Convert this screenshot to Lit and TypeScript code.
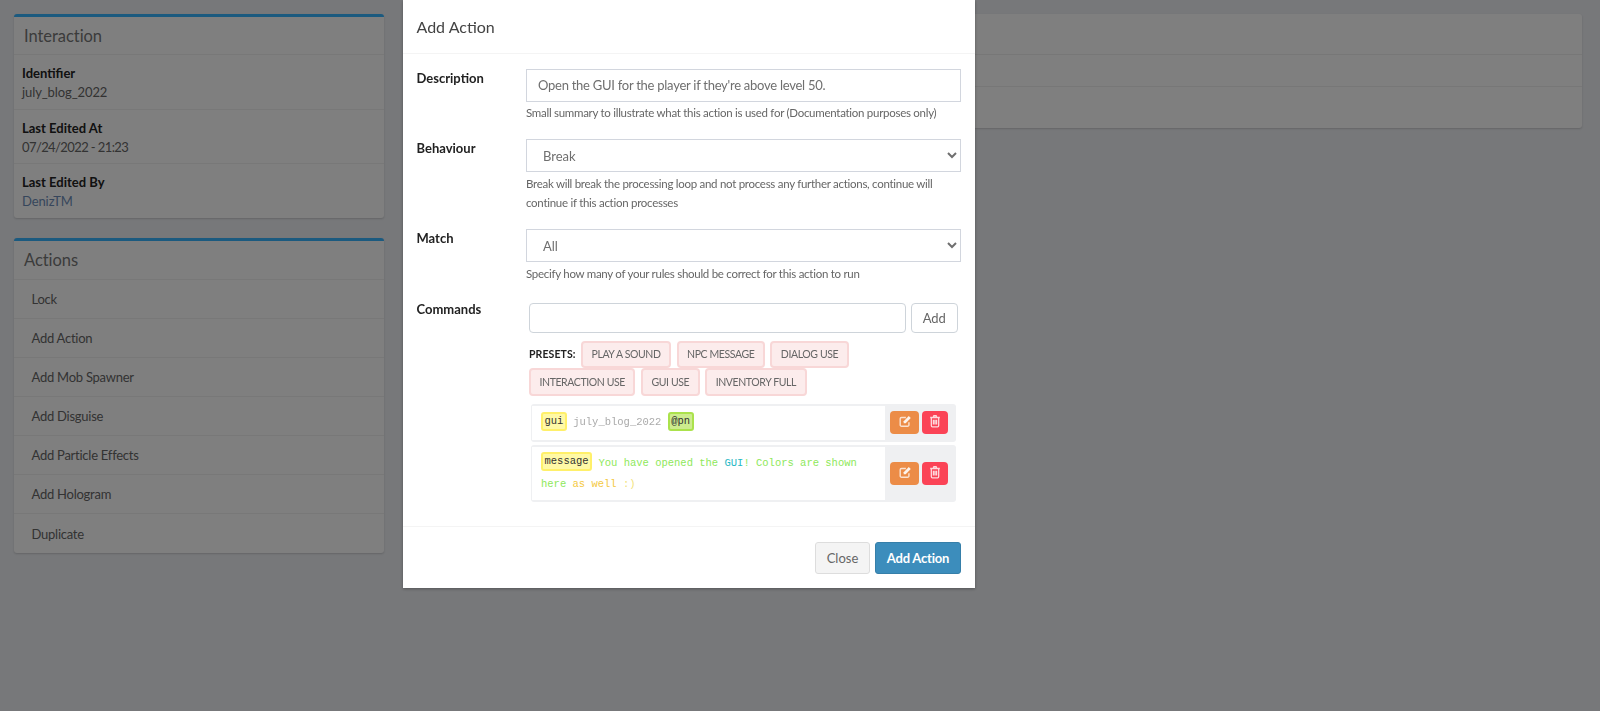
import { LitElement, html, css } from "lit";
import { customElement } from "lit/decorators.js";

const editIcon = html`<svg class="ico" viewBox="0 0 16 16" fill="none"><path d="M12.500 9.500v3a1.500 1.500 0 0 1-1.500 1.500H4a1.500 1.500 0 0 1-1.500-1.500v-7A1.500 1.500 0 0 1 4 4h5" stroke="#fff" stroke-opacity=".75" stroke-width="1.600"/><path d="M6.500 8.200 12.300 2.400l2.300 2.300-5.800 5.800H6.500z" fill="#fff" fill-opacity=".9"/></svg>`;
const trashIcon = html`<svg class="ico" viewBox="0 0 16 16" fill="none" stroke="#fff" stroke-opacity=".8" stroke-width="1.500"><path d="M2.500 4h11M6 4l.7-2h2.600L10 4M3.800 4v9.200c0 .9.500 1.500 1.200 1.500h6c.7 0 1.200-.6 1.200-1.500V4M6.200 6.500v5.500M8 6.500v5.500M9.800 6.500v5.500"/></svg>`;

@customElement("app-root")
export class AppRoot extends LitElement {
  static styles = css`
    :host { display: block; min-height: 100vh; background: #eef0f4; font-family: "Lato", "Source Sans Pro", sans-serif; color: #333; font-size: 13px; }
    * { box-sizing: border-box; }
    .page { display: grid; grid-template-columns: 370px 1fr; gap: 30px; padding: 14px 18px 0 14px; height: 711px; overflow: hidden; align-items: start; }
    .col { display: flex; flex-direction: column; gap: 20px; }
    .card { background: #fff; border-radius: 3px; box-shadow: 0 1px 2px rgba(0,0,0,.16); }
    .card.blue { border-top: 3px solid #37b4ff; }
    .card-title { height: 38px; padding: 0 10px; display: flex; align-items: center; font-size: 16.500px; color: #777; border-bottom: 1px solid #f1f1f1; letter-spacing: -.05px; }
    .info { height: 54.500px; padding: 9px 8px 0; border-bottom: 1px solid #f1f1f1; line-height: 19px; color: #666; letter-spacing: -.1px; }
    .info:last-child { border-bottom: 0; height: 54px; }
    .info b { display: block; color: #222; letter-spacing: 0; }
    .date { letter-spacing: -.6px; }
    .link { color: #6d8db8; }
    .act-title { height: 39px; }
    .act { height: 39px; padding-left: 17.500px; display: flex; align-items: center; color: #666; border-bottom: 1px solid #f1f1f1; letter-spacing: -.25px; }
    .act:last-child { border-bottom: 0; }
    .empty1 { height: 41px; border-bottom: 1px solid #eee; }
    .empty2 { height: 32px; border-bottom: 1px solid #eee; }
    .empty3 { height: 41px; }

    .overlay { position: fixed; inset: 0; background: rgba(0,0,0,.5); }
    .modal { position: absolute; left: 402.500px; top: 0; width: 572.500px; height: 588px; background: #fff; box-shadow: 0 1px 3px rgba(0,0,0,.3); display: flex; flex-direction: column; }
    .m-head { height: 54px; padding: 0 14px; display: flex; align-items: center; font-size: 16px; color: #444; border-bottom: 1px solid #f4f4f4; flex: none; }
    .m-body { flex: 1; padding: 15px 14px 0; }
    .group { display: grid; grid-template-columns: 109.500px 1fr; margin-bottom: 16.500px; }
    .group > label { font-weight: 700; color: #222; line-height: 18px; }
    input, select { font: inherit; font-size: 13px; display: block; width: 100%; background: #fff; color: #6f6f6f; border: 1px solid #d2d6de; }
    .text { height: 32.500px; padding: 0 11px; letter-spacing: -.26px; }
    select { height: 33px; padding: 0 12px; border-radius: 0; }
    .help { margin-top: 1.500px; font-size: 11.500px; line-height: 19.500px; color: #666; letter-spacing: -.28px; }
    .cmds { padding: 3px 3px 0; }
    .addline { display: flex; gap: 4.500px; height: 30px; }
    .addline input { flex: 1; border: 1px solid #ced4da; border-radius: 4px; height: 30px; }
    .addline button { width: 47.500px; height: 30px; background: #fff; border: 1px solid #ced4da; border-radius: 4px; font: inherit; color: #666; padding: 0; }
    .presets { display: flex; flex-wrap: wrap; align-items: center; margin-top: 8px; column-gap: 5.500px; }
    .presets b { font-size: 10.500px; letter-spacing: .1px; color: #222; width: 46.500px; }
    .chip { height: 27.500px; padding: 0 8.500px; display: flex; align-items: center; font-size: 10.500px; color: #666; background: #fcecec; border: 2px solid #f8d7d7; border-radius: 4px; text-transform: uppercase; letter-spacing: -.4px; }
    .list { display: flex; flex-direction: column; gap: 3px; margin: 8px 2px 0; }
    .row { display: flex; background: #eff0f2; border-radius: 3px; padding: 2px 0 2px 1px; }
    .code { flex: 1; background: #fff; padding: 6px 9px 5px; font: 10.500px/21px "Liberation Mono", monospace; color: #aaa; }
    .row.one .code { padding: 6.500px 9px; height: 34px; }
    .tag { display: inline-block; height: 19px; line-height: 15px; padding: 0 1.500px; color: #333; border: 2px solid; border-radius: 3px; vertical-align: middle; position: relative; top: -1px; }
    .y { background: #fff9a6; border-color: #fff06a; }
    .g { background: #cdec8e; border-color: #abe24c; }
    .grn { color: #8ee85a; }
    .cy { color: #27b8c4; }
    .gold { color: #f4c93f; }
    .pale { color: #f2e27a; }
    .btns { width: 71px; flex: none; display: flex; align-items: center; gap: 3px; padding-left: 5px; }
    .ib { height: 23px; border-radius: 4px; display: flex; align-items: center; justify-content: center; }
    .ib.e { width: 29px; background: #ec8c47; }
    .ib.d { width: 26px; background: #fb4356; }
    .ico { width: 14px; height: 14px; margin-bottom: 3px; }
    .m-foot { height: 62px; flex: none; border-top: 1px solid #f4f4f4; padding: 14.500px 14px 0; display: flex; justify-content: flex-end; gap: 5px; }
    .m-foot button { height: 32px; font: inherit; border-radius: 3px; padding: 0; }
    .close { width: 55px; background: #f4f4f4; border: 1px solid #ddd; color: #666; }
    .primary { width: 86px; background: #3c8dbc; border: 1px solid #367fa9; color: #fff; font-weight: 700 !important; letter-spacing: -.2px; }
  `;

  render() {
    const actions = ["Lock","Add Action","Add Mob Spawner","Add Disguise","Add Particle Effects","Add Hologram","Duplicate"];
    return html`
      <div class="page">
        <div class="col">
          <section class="card blue">
            <div class="card-title">Interaction</div>
            <div class="info"><b>Identifier</b>july_blog_2022</div>
            <div class="info"><b>Last Edited At</b><span class="date">07/24/2022 - 21:23</span></div>
            <div class="info"><b>Last Edited By</b><span class="link">DenizTM</span></div>
          </section>
          <section class="card blue">
            <div class="card-title act-title">Actions</div>
            ${actions.map((a) => html`<div class="act">${a}</div>`)}
          </section>
        </div>
        <section class="card">
          <div class="empty1"></div><div class="empty2"></div><div class="empty3"></div>
        </section>
      </div>
      <div class="overlay">
        <div class="modal">
          <div class="m-head">Add Action</div>
          <div class="m-body">
            <div class="group">
              <label>Description</label>
              <div>
                <input class="text" .value=${"Open the GUI for the player if they're above level 50."} />
                <div class="help">Small summary to illustrate what this action is used for (Documentation purposes only)</div>
              </div>
            </div>
            <div class="group">
              <label>Behaviour</label>
              <div>
                <select><option>Break</option><option>Continue</option></select>
                <div class="help">Break will break the processing loop and not process any further actions, continue will continue if this action processes</div>
              </div>
            </div>
            <div class="group">
              <label>Match</label>
              <div>
                <select><option>All</option><option>Any</option></select>
                <div class="help">Specify how many of your rules should be correct for this action to run</div>
              </div>
            </div>
            <div class="group">
              <label>Commands</label>
              <div class="cmds">
                <div class="addline"><input /><button>Add</button></div>
                <div class="presets">
                  <b>PRESETS:</b>
                  ${["Play a sound","NPC Message","Dialog Use","Interaction Use","GUI Use","Inventory Full"].map((p) => html`<span class="chip">${p}</span>`)}
                </div>
                <div class="list">
                  <div class="row one">
                    <div class="code"><span class="tag y">gui</span> july_blog_2022 <span class="tag g">@pn</span></div>
                    <div class="btns"><span class="ib e">${editIcon}</span><span class="ib d">${trashIcon}</span></div>
                  </div>
                  <div class="row">
                    <div class="code"><span class="tag y">message</span> <span class="grn">You have opened the</span> <span class="cy">GUI</span><span class="grn">!</span> <span class="grn">Colors are shown</span><br /><span class="grn">here</span> <span class="gold">as well</span> <span class="pale">:)</span></div>
                    <div class="btns"><span class="ib e">${editIcon}</span><span class="ib d">${trashIcon}</span></div>
                  </div>
                </div>
              </div>
            </div>
          </div>
          <div class="m-foot"><button class="close">Close</button><button class="primary">Add Action</button></div>
        </div>
      </div>
    `;
  }
}
